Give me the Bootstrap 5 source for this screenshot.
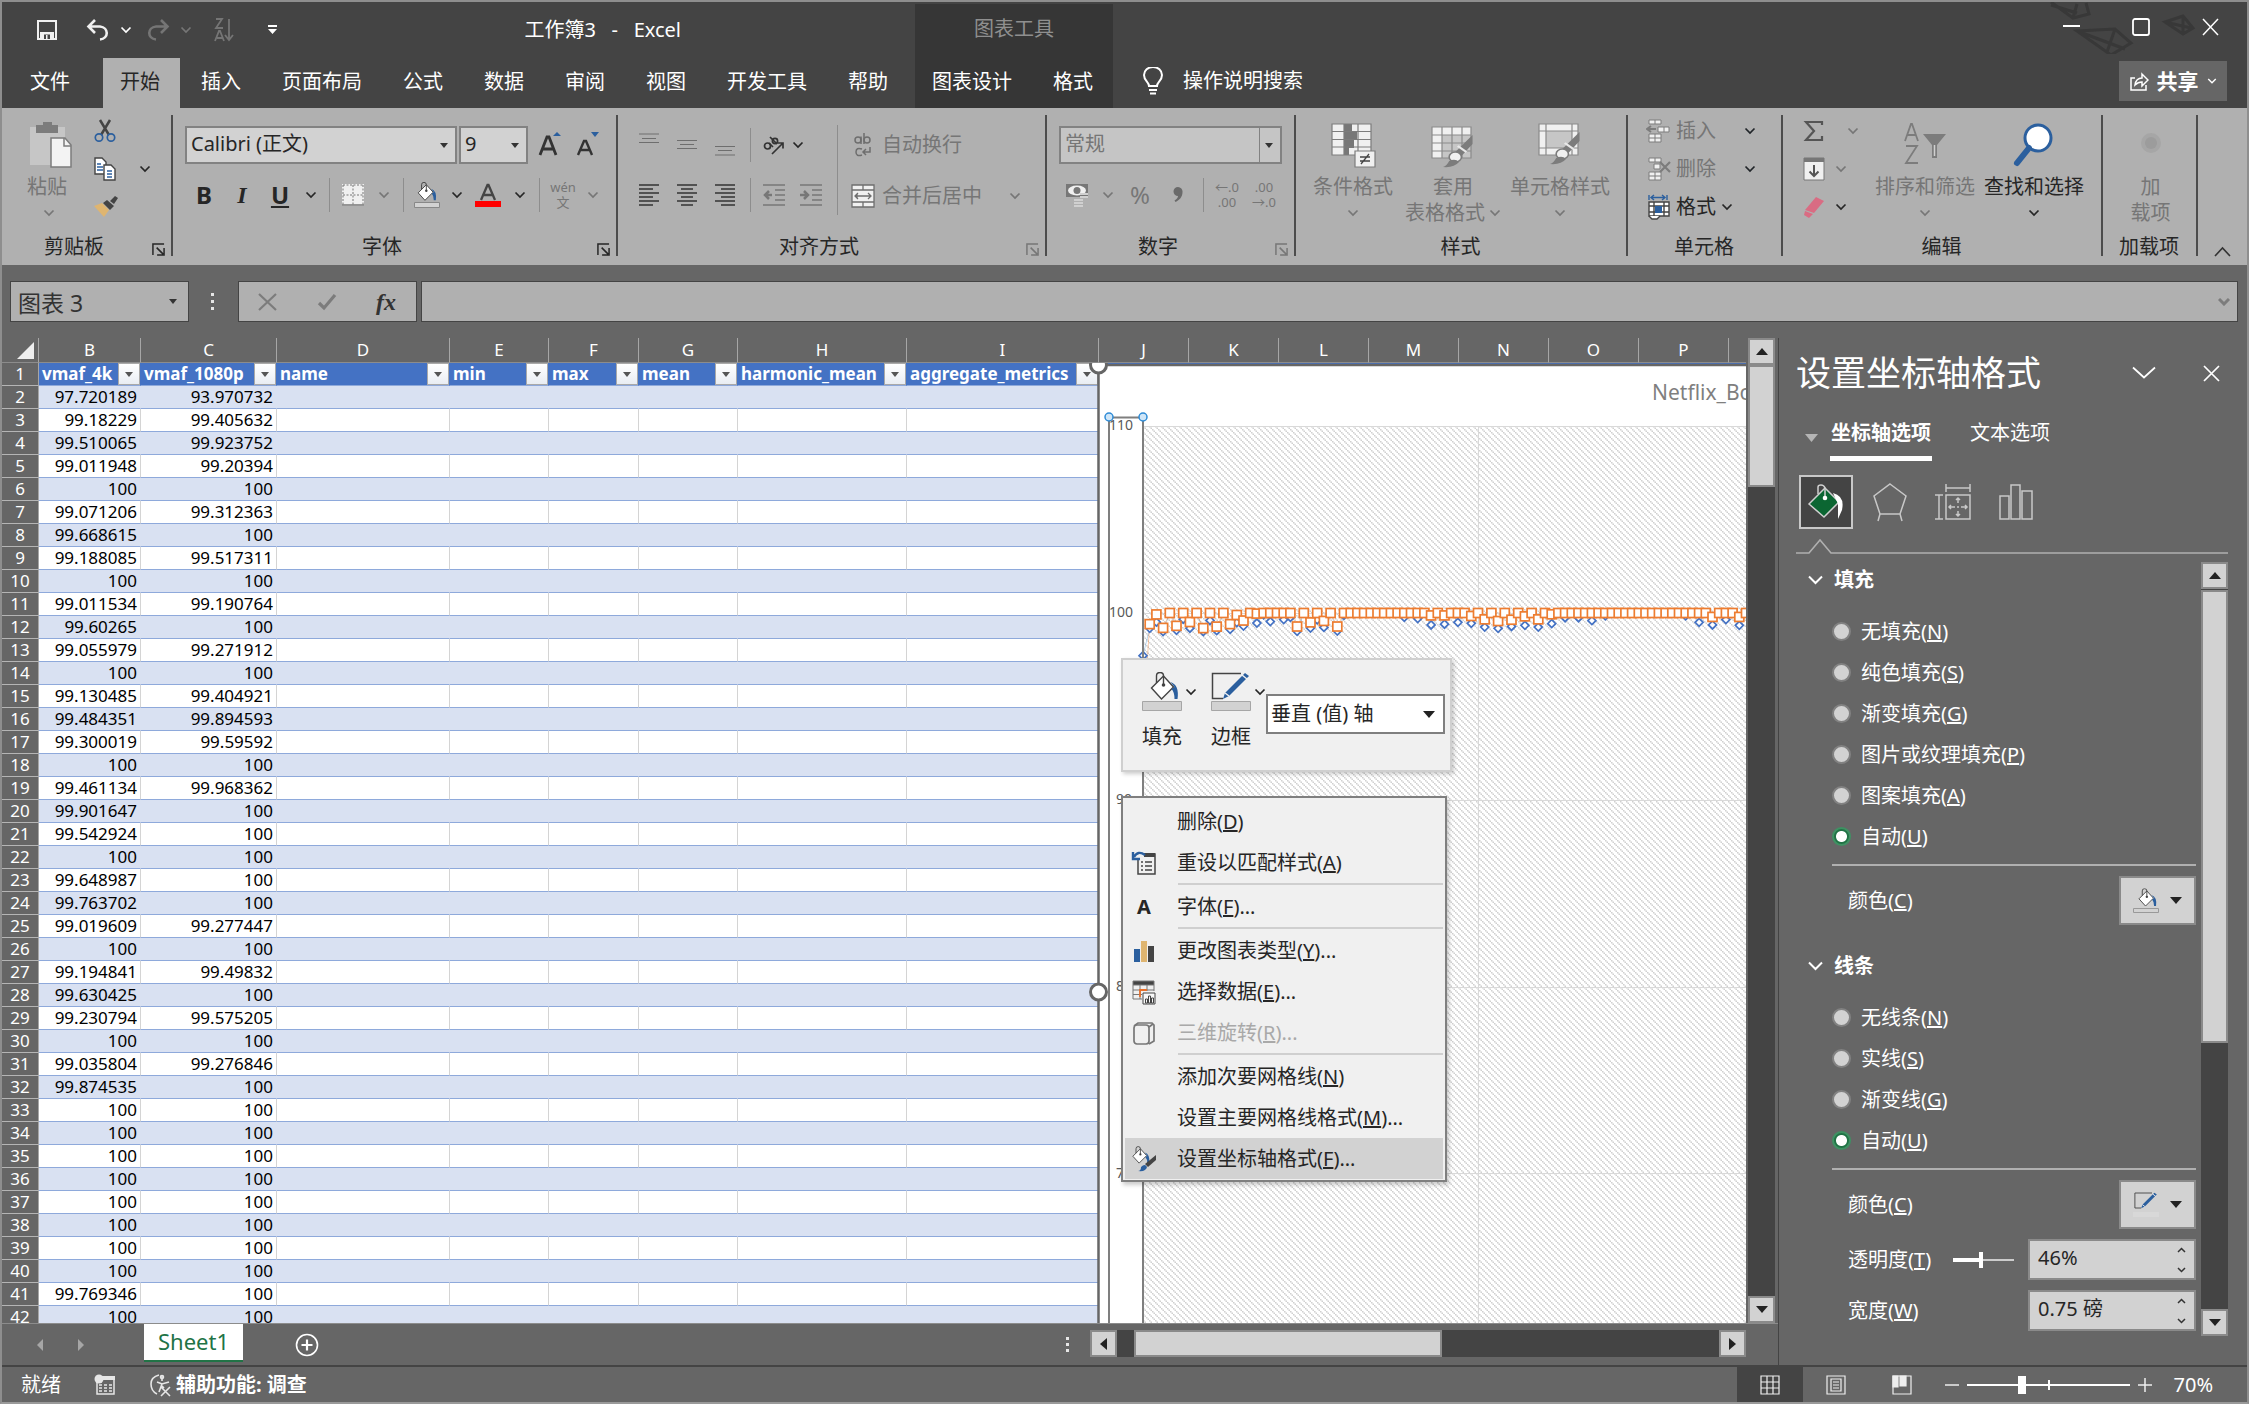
<!DOCTYPE html>
<html lang="zh-CN">
<head>
<meta charset="utf-8">
<meta name="viewport" content="width=device-width, initial-scale=1">
<title>工作簿3 - Excel</title>
<link href="https://cdn.jsdelivr.net/npm/bootstrap@5.3.0/dist/css/bootstrap.min.css" rel="stylesheet">
<style>
:root{--ink:#262626;--dim:#767676;--bar:#444;--mid:#666;--rib:#b0b0b0;--fld:#d2d2d2;--edge:#828282;--blue:#2b5f9e}
html,body{height:100%}
body{font-family:"Noto Sans","Noto Sans CJK SC",sans-serif;font-size:20px;line-height:26px;color:#fff;background:var(--mid);overflow:hidden}
.app{height:100vh;border:2px solid #8e8e8e;border-bottom-color:#9a9a9a}
.app>*{flex-shrink:0}
svg{display:block;flex:none}
button{font:inherit;color:inherit;background:none;border:0;padding:0}
.ctl{display:flex;align-items:center;justify-content:center;flex:none;height:34px}
.w12{width:12px}.w24{width:24px}.w26{width:26px}.w32{width:32px}.w36{width:36px}.w38{width:38px}.w44{width:44px}
/* title */
.titlebar{height:52px;background:var(--bar);position:relative}
.qat{width:913px;padding:3px 234px 0 34px}
.qat button{height:40px}
.ctx{background:#363636;width:198px;flex:none}
.titlebar .ctx{margin-top:2px;color:#8f8f8f}
.artwork{right:40px;top:0}
.winbtns{gap:52px;padding:0 28px 2px 0;position:relative}
.tabs{height:54px;background:var(--bar)}
.tabs a{color:#fff;text-decoration:none;white-space:nowrap;display:flex;align-items:center;padding:0 20px 3px 17px;margin:4px 1px 0 3px;height:50px}
.tabs a.filetab{padding:0 30px 3px 28px}
.tabs a.on{background:var(--rib);color:var(--ink)}
.tabs .ctx{margin-left:6px}
.tabs .ctx a{padding:4px 21px 3px 17px;margin:0 3px 0 0;height:54px}
.tabs .ctx a+a{margin:0;padding-right:0}
.tellme{padding-left:30px;gap:20px}
.share{background:var(--mid);width:108px;height:40px;margin:7px 20px 7px 0;font-weight:700;gap:8px;font-size:21px}
/* ribbon */
.ribbon{height:157px;background:var(--rib);color:var(--ink)}
.grp{display:flex;flex-direction:column;flex:none;position:relative}
.grp::after{content:"";position:absolute;right:0;top:7px;height:141px;width:2px;background:#4c4c4c}
.grp .body{height:126px;display:flex}
.grp .name{height:26px;display:flex;justify-content:center;align-items:center;padding-right:3px;position:relative}
.grp .launch{position:absolute;right:8px;top:9px}
.g-clip{width:171px}.g-font{width:445px}.g-align{width:429px}.g-num{width:249px}.g-style{width:332px}.g-cell{width:155px}.g-edit{width:320px}.g-add{width:95px}
.dim{color:var(--dim)}
.big{display:flex;flex-direction:column;align-items:center;padding-top:13px;white-space:nowrap}
.big>svg{margin-bottom:5px}
.big .ch{height:26px;display:flex;align-items:center}
.paste{width:76px;padding-left:22px}
.rows{padding-left:12px;padding-top:18px;gap:17px}
.row-b{margin-top:-3px}
.vs{width:12px;height:34px;flex:none;background:linear-gradient(#8d8d8d,#8d8d8d) center/1px 100% no-repeat}
.vs.tall{height:90px;width:14px;margin-top:17px}
.small3{padding-top:4px}
.small3>*{height:38px;display:flex;align-items:center}
.two{flex-direction:column;font-size:13px;line-height:15px}
select.cmb{appearance:none;background:var(--fld) url('data:image/svg+xml,<svg xmlns="http://www.w3.org/2000/svg" width="8" height="5"><path d="M0 0h8L4 5z" fill="%23333"/></svg>') no-repeat right 7px center;border:2px solid var(--edge);border-radius:0;height:38px;padding:0 4px 2px;font-size:20px;color:var(--ink);flex:none}
.cmb-face{width:272px}.cmb-size{width:69px;margin-left:2px}
select.cmb-num{width:223px;background-color:#c5c5c5;color:var(--dim)}
.numwrap{position:relative;width:223px}
.numwrap::after{content:"";position:absolute;right:22px;top:2px;bottom:2px;width:1px;background:var(--edge)}
.wr{gap:6px;padding-left:6px;height:38px;display:flex;align-items:center}
/* formula bar */
.fbar{height:73px;padding:16px 9px 0 8px}
.fbar input,.fxbox{height:41px;background:var(--rib);border:1px solid var(--bar);border-radius:0}
.namebox{width:179px;position:relative}
.namebox input{width:100%;font-size:23px;color:#333;padding:0 7px}
.namebox svg{position:absolute;right:12px;top:18px}
.fxbox{width:179px;display:flex;justify-content:space-between;align-items:center;padding:0 20px 0 19px}
.frm{position:relative;margin-left:4px}
.frm input{width:100%}
.frm svg{position:absolute;right:8px;top:17px}
/* grid */
main{min-height:0;flex:1 1 0}
.vp{position:relative;overflow:hidden}
table.xl{table-layout:fixed;width:1817px;border-collapse:separate;border-spacing:0;font-size:17px;line-height:22px;color:#000;background:#fff}
.xl thead th{height:25px;background:var(--mid);color:#fff;font-weight:400;text-align:center;padding:0;border-right:1px solid #a6a6a6;border-bottom:1px solid #8c8c8c}
.xl tbody tr{height:23px}
.xl tbody th{background:var(--mid);color:#fff;font-weight:400;text-align:center;padding:0;border-bottom:1px solid #b5b5b5;border-right:1px solid #a6a6a6}
.xl td{padding:0 3px 0 0;height:23px;text-align:right;border-bottom:1px solid #8ea9db;border-right:1px solid #d4d4d4;white-space:nowrap}
.xl tr.band td{background:#d9e1f2;border-right-color:#d9e1f2}
.xl tr.hd td{background:#4472c4;color:#fff;font-weight:700;padding:0;border-right-color:#4472c4}
.xl tr.hd td div{height:22px;padding-left:3px;overflow:hidden}
.flt{width:22px;height:22px;background:linear-gradient(#fff,#e9edf3);border:1px solid #a9a9a9;display:flex;align-items:center;justify-content:center;flex:none}
.c0{width:37px}.cB{width:102px}.cC{width:136px}.cD{width:173px}.cE{width:99px}.cF{width:90px}.cG{width:99px}.cH{width:169px}.cI{width:192px}.cJ{width:90px}
.chartbox{position:absolute;left:1084px;top:25px;right:0;bottom:0;overflow:hidden}
.mini{position:absolute;left:1119px;top:320px;width:331px;height:114px;background:#f0f0f0;border:2px solid #cfcfcf;box-shadow:2px 2px 4px #0003;color:var(--ink);padding:12px 4px 0 19px}
.mini .mb{display:flex;flex-direction:column;width:69px;align-items:flex-start;flex:none}
.mini .mb>div{display:flex;align-items:center;gap:2px}
.mini .mb span{margin-top:12px}
.mini select{appearance:none;width:179px;height:40px;margin-top:22px;margin-left:-14px;border:2px solid #7f7f7f;border-radius:0;color:var(--ink);font-size:20px;padding:0 3px 1px;background:#fff url('data:image/svg+xml,<svg xmlns="http://www.w3.org/2000/svg" width="12" height="7"><path d="M0 0h12L6 7z" fill="%23222"/></svg>') no-repeat right 8px center}
.ctxmenu{position:absolute;left:1119px;top:458px;width:326px;background:#f0f0f0;border:2px solid #7f7f7f;box-shadow:2px 3px 4px #0003;color:var(--ink);padding:3px 2px 1px}
.ctxmenu button{display:flex;align-items:center;width:100%;height:41px;padding-left:6px}
.ctxmenu button>svg,.ctxmenu button>i{width:26px;height:26px;margin-right:20px;flex:none;font-style:normal;font-weight:700;text-align:center}
.ctxmenu button.hot{background:#d2d2d2}
.ctxmenu button:disabled{color:#a9a9a9}
.ctxmenu hr{margin:0 0 1px 53px;border:0;height:2px;background:#cfcfcf;opacity:1}
/* scroll bars */
.sb{background:var(--bar);width:27px;flex:none;display:flex;flex-direction:column}
.sb.hz{width:auto;height:27px;flex-direction:row}
.sbb{background:var(--fld);border:2px solid #8a8a8a;width:27px;height:27px;display:flex;align-items:center;justify-content:center;flex:none}
.thumb{background:var(--fld);border:2px solid #8a8a8a;flex:none}
.th-v{height:122px}.th-h{width:308px;margin-left:17px}.th-p{height:453px;margin-top:1px}
.vcol{width:32px;padding:0 3px 0 2px;flex:none}
.foot{height:42px;border-top:1px solid #8c8c8c;flex:none}
.sheettab{background:#fff;color:#217346;font-size:22px;height:38px;width:99px;border-bottom:2px solid #217346;margin:0 52px 0 60px;text-decoration:none;display:flex;justify-content:center;align-items:center;padding-bottom:2px}
.hbar{width:656px;padding-top:6px}
/* pane */
.pane{width:469px;border-left:1px solid var(--bar);flex:none;padding:0 19px 0 17px}
.pane h1{font-size:35px;line-height:48px;font-weight:400;margin:0}
.phead{padding-top:11px;padding-right:8px}
.ptabs{padding:15px 0 0 9px;height:65px}
.ptabs a{color:#fff;text-decoration:none;line-height:42px;height:44px}
.ptabs a.on{font-weight:700;border-bottom:5px solid #fff;padding:0 1px;height:49px;margin:0 38px 0 12px}
.picons{padding:13px 0 0 3px;gap:20px}
.picons button{height:54px;display:flex;align-items:center;justify-content:center}
.picons .on{width:54px;background:var(--bar);border:2px solid #c8c8c8}
.notch{height:16px;margin-top:9px}
.pbody{padding:8px 0 29px;min-height:0}
.plist{padding:0 5px 0 12px}
.sec{height:36px;gap:11px;font-weight:700}
.opts{padding:13px 0 7px}
.opt{display:flex;align-items:center;height:41px;gap:10px;padding-left:24px}
.opt input{appearance:none;width:19px;height:19px;border-radius:50%;background:#d2d2d2;border:2px solid #828282;margin:0;flex:none}
.opt input:checked{background:radial-gradient(#fff 0 5px,#217346 6px);border-color:#3f9163}
.rule{height:2px;background:#b0b0b0;margin-left:24px}
.prow{display:flex;align-items:center;padding-left:40px;height:51px}
.rule+.prow{margin-top:9px}
.clr{width:77px;height:49px;background:var(--fld);border:2px solid #8a8a8a;margin-left:auto;display:flex;align-items:center;justify-content:center;gap:11px}
.spin{width:168px;height:41px;border:2px solid #8a8a8a;background:var(--fld);display:flex;align-items:center;padding-right:8px;flex:none}
.spin input{border:0;background:none;width:100%;min-width:0;color:var(--ink);font-size:20px;padding:0 8px 4px}
.rng{appearance:none;width:61px;height:16px;margin:0 14px 0 auto;background:linear-gradient(#fff,#fff) left center/28px 4px no-repeat,linear-gradient(#ccc,#ccc) center/100% 2px no-repeat}
.rng::-webkit-slider-thumb{appearance:none;width:4px;height:16px;background:#fff}
/* status */
.status{height:37px;border-top:2px solid var(--bar)}
.status .vb{width:66px;height:35px;display:flex;align-items:center;justify-content:center;flex:none}
.status .vb.sel{background:var(--bar)}
.zoomr{appearance:none;width:163px;height:18px;margin:0 8px;background:linear-gradient(#fff,#fff) 81px center/2px 10px no-repeat,linear-gradient(#fff,#fff) center/100% 2px no-repeat}
.zoomr::-webkit-slider-thumb{appearance:none;width:8px;height:18px;background:#fff}
.pct{padding:0 34px 0 22px}
</style>
<script src="https://cdn.jsdelivr.net/npm/bootstrap@5.3.0/dist/js/bootstrap.bundle.min.js"></script>
</head>
<body>
<svg width="0" height="0" class="position-absolute" aria-hidden="true">
<symbol id="chev" viewBox="0 0 12 8"><path d="M1.500 1.500L6 6l4.500-4.500" fill="none" stroke="currentColor" stroke-width="1.700"/></symbol>
<symbol id="launch" viewBox="0 0 14 14"><path d="M1 13V1h12M5 5l7 7M13 5.500V13H5.500" fill="none" stroke="currentColor" stroke-width="1.600"/></symbol>
<symbol id="bucket" viewBox="0 0 32 28"><path d="M3 16L15 4l10 11-12 12z" fill="#fff" stroke="#444" stroke-width="1.400"/><path d="M8 11V4q0-3.500 3.500-3.500T15 4v9" fill="none" stroke="#444" stroke-width="1.400"/><circle cx="15" cy="13" r="1.800" fill="#444"/><path d="M22 10q9 3 7 17h-3q0-7-3-10l3-2z" fill="#2b5f9e"/></symbol>
<symbol id="pen" viewBox="0 0 40 28"><path d="M30 1.500H1.500v25H12" fill="none" stroke="#444" stroke-width="1.500"/><path d="M12 27l2-6L34 1l4 3-20 20z" fill="#2b5f9e"/><path d="M31 3l5 4M14 21l4 3" stroke="#f0f0f0" stroke-width="1.500"/></symbol>
<symbol id="tbrush" viewBox="0 0 26 36"><path d="M24 1v9L15 22l-5-4z" fill="#7c7c7c"/><path d="M12 12l7 6" stroke="#e8e8e8" stroke-width="2"/><circle cx="10" cy="23" r="5" fill="#f0f0f0" stroke="#7c7c7c" stroke-width="1.300"/><path d="M0 33q3-1 5-6 5-3 8 1-4 6-13 5z" fill="#7c7c7c"/></symbol>
</svg>
<div class="app d-flex flex-column">

<header>
<div class="titlebar d-flex">
  <svg class="artwork position-absolute" width="170" height="52" fill="none" stroke="#383838" stroke-width="3"><path d="M14 0l22 16 16-4-3-11M14 3l26 8M36 16l4-14M40 29l38-2 16 14-20 12zM40 29l48 18M78 27L70 50M128 20l18-6 10 12-10 6zM128 20l26 6M146 14v18"/></svg>
  <div class="qat d-flex align-items-center">
    <button aria-label="保存"><svg width="22" height="22" fill="none" stroke="#f0f0f0" stroke-width="2"><path d="M2 2h18v18H2z"/><path d="M4 13h14v7H4z" fill="#f0f0f0" stroke="none"/><path d="M8 15.500h6V20H8z" fill="#444" stroke="none"/><path d="M10 16h1.500v4H10z" fill="#f0f0f0" stroke="none"/></svg></button>
    <button class="ms-4 ps-1" aria-label="撤消"><svg width="24" height="22" fill="none" stroke="#f0f0f0" stroke-width="2.600"><path d="M9 1L2.500 7.500 9 14M3 7.500h11c9 1 9 12 0 13"/></svg></button>
    <button class="w32 ctl"><svg width="12" height="8"><use href="#chev"/></svg></button>
    <button class="ms-1" aria-label="恢复"><svg width="24" height="22" fill="none" stroke="#757575" stroke-width="2.600"><path d="M15 1l6.500 6.500L15 14M21 7.500H10c-9 1-9 12 0 13"/></svg></button>
    <button class="w32 ctl dim"><svg width="12" height="8"><use href="#chev"/></svg></button>
    <button class="ms-2 ps-1" aria-label="排序"><svg width="22" height="26" fill="none" stroke="#757575" stroke-width="1.800"><path d="M2 2h6L2 11h7M1 24l4-10h1l4 10M3 21h6M15 2v20M11 18l4 5 4-5"/></svg></button>
    <button class="ms-4 ps-2" aria-label="自定义"><svg width="9" height="10" fill="#fff"><path d="M0 0h9v2H0zM0 4h9L4.500 9z"/></svg></button>
    <div class="ms-auto">工作簿3&nbsp;&nbsp; -&nbsp;&nbsp; Excel</div>
  </div>
  <div class="ctx d-flex align-items-center justify-content-center">图表工具</div>
  <div class="winbtns ms-auto d-flex align-items-center">
    <button aria-label="最小化"><svg width="17" height="18"><path d="M0 7h17v2H0z" fill="#fff"/></svg></button>
    <button aria-label="最大化"><svg width="18" height="18" fill="none" stroke="#fff" stroke-width="1.800"><rect x="1" y="1" width="16" height="16" rx="2"/></svg></button>
    <button aria-label="关闭"><svg width="17" height="18" fill="none" stroke="#fff" stroke-width="1.500"><path d="M1 1l15 16M16 1L1 17"/></svg></button>
  </div>
</div>
<nav class="tabs d-flex">
  <a href="#" class="filetab m-0 mt-1">文件</a><a href="#" class="on">开始</a><a href="#">插入</a><a href="#">页面布局</a><a href="#">公式</a><a href="#">数据</a><a href="#">审阅</a><a href="#">视图</a><a href="#">开发工具</a><a href="#">帮助</a>
  <div class="ctx d-flex"><a href="#">图表设计</a><a href="#">格式</a></div>
  <div class="tellme d-flex align-items-center"><svg width="20" height="28" fill="none" stroke="#fff" stroke-width="2"><path d="M6 19c0-4-5-5-5-11a9 8 0 0 1 18 0c0 6-5 7-5 11zM6 23h8M7 26.500h6"/></svg><span>操作说明搜索</span></div>
  <button class="share ms-auto d-flex align-items-center justify-content-center"><svg width="19" height="20" fill="none" stroke="#fff" stroke-width="1.500"><path d="M5 7H1v12h15v-5M5 14q1-7 7-7V3l6 6-6 6v-4q-4 0-7 3z"/></svg>共享<svg width="10" height="8"><use href="#chev"/></svg></button>
</nav>
</header>

<section class="ribbon d-flex">
  <div class="grp g-clip">
    <div class="body">
      <button class="big dim paste">
        <svg width="44" height="48" fill="none"><path d="M1 6h35v38H1z" fill="#c6c6c6"/><path d="M7 4h7V1h9v3h6v8H7z" fill="#7c7c7c"/><path d="M22 17h14l6 7v22H22z" fill="#f3f3f3" stroke="#7c7c7c" stroke-width="1.500"/><path d="M35 17v8h7" stroke="#7c7c7c" stroke-width="1.500"/></svg>
        <span class="pe-2">粘贴</span><span class="ch pe-1"><svg width="12" height="8"><use href="#chev"/></svg></span></button>
      <div class="small3 ps-3">
        <button aria-label="剪切"><svg width="22" height="24" fill="none"><path d="M6 1l9 15M16 1L7 16" stroke="#444" stroke-width="2.500"/><circle cx="5" cy="18.500" r="3.700" stroke="#2b5f9e" stroke-width="1.700"/><circle cx="17" cy="18.500" r="3.700" stroke="#2b5f9e" stroke-width="1.700"/></svg></button>
        <div><button aria-label="复制"><svg width="22" height="24" fill="#fff" stroke="#444" stroke-width="1.400"><path d="M1 1h7l4 4v12H1z"/><path d="M10 8h7l4 4v11H10z"/><path d="M3 7h4M3 10h6M3 13h6M13 14h5M13 17h5M13 20h5" stroke="#2b5f9e"/></svg></button><button class="ctl w26 ms-3"><svg width="12" height="8"><use href="#chev"/></svg></button></div>
        <button aria-label="格式刷"><svg width="24" height="22"><path d="M0 10l8-3 7 7-5 7z" fill="#dfb570"/><path d="M9 7l4-3 7 6-4 4zM16 5l5-5 3 2-4 6z" fill="#444"/></svg></button>
      </div>
    </div>
    <div class="name"><span class="pe-4">剪贴板</span><svg class="launch" width="13" height="13"><use href="#launch"/></svg></div>
  </div>

  <div class="grp g-font">
    <div class="body flex-column rows">
      <div class="d-flex align-items-center">
        <select class="cmb cmb-face" aria-label="字体"><option>Calibri (正文)</option></select><select class="cmb cmb-size" aria-label="字号"><option>9</option></select>
        <button class="ctl w44"><svg width="24" height="26"><path d="M2 23L9 5h2l7 18M5 17h10" fill="none" stroke="#333" stroke-width="2.800"/><path d="M15 4l4-4 4 4z" fill="#2b5f9e"/></svg></button>
        <button class="ctl w32"><svg width="24" height="26"><path d="M2 23L8 9h2l6 14M5 18h8" fill="none" stroke="#333" stroke-width="2.400"/><path d="M15 0h8l-4 5z" fill="#2b5f9e"/></svg></button>
      </div>
      <div class="d-flex align-items-center row-b">
        <button class="ctl w38 fw-bold fs-4">B</button><button class="ctl w38 fs-4 fst-italic" style="font-family:'Liberation Serif',serif;font-weight:700">I</button><button class="ctl w38 fs-4 fw-bold text-decoration-underline">U</button><button class="ctl w24"><svg width="12" height="8"><use href="#chev"/></svg></button><i class="vs"></i>
        <button class="ctl w36" aria-label="边框"><svg width="22" height="22"><path d="M0 0h22v22H0z" fill="#f0f0f0"/><path d="M1 1h20M1 1v20M21 1v20M11 1v20M1 11h20" stroke="#777" stroke-dasharray="2 1.500"/><path d="M0 21h22" stroke="#777" stroke-width="1.500"/></svg></button><button class="ctl w26 dim"><svg width="12" height="8"><use href="#chev"/></svg></button><i class="vs"></i>
        <button class="ctl w36" aria-label="填充颜色"><svg width="26" height="26"><svg x="2" y="0" width="22" height="19" viewBox="0 0 32 28"><use href="#bucket"/></svg><path d="M.5 20.500h25v5H.5z" fill="#d2d2d2" stroke="#888"/></svg></button><button class="ctl w24"><svg width="12" height="8"><use href="#chev"/></svg></button>
        <button class="ctl w38" aria-label="字体颜色"><svg width="26" height="26"><path d="M6 18L12.500 3h1L20 18M9 13h8" fill="none" stroke="#444" stroke-width="2.300"/><path d="M0 19h26v6H0z" fill="#f00"/></svg></button><button class="ctl w26"><svg width="12" height="8"><use href="#chev"/></svg></button><i class="vs"></i>
        <button class="ctl w36 dim two"><span>wén</span><span>文</span></button><button class="ctl w24 dim"><svg width="12" height="8"><use href="#chev"/></svg></button>
      </div>
    </div>
    <div class="name"><span class="pe-4">字体</span><svg class="launch" width="13" height="13"><use href="#launch"/></svg></div>
  </div>

  <div class="grp g-align">
    <div class="body">
      <div class="d-flex flex-column rows">
        <div class="d-flex align-items-center" style="height:38px">
          <button class="ctl w38" aria-label="顶端对齐"><svg width="20" height="24" stroke="#6e6e6e" stroke-width="1.200"><path d="M0 1h20M3 5.500h14M0 9.500h20"/></svg></button><button class="ctl w38" aria-label="垂直居中"><svg width="20" height="24" stroke="#6e6e6e" stroke-width="1.200"><path d="M0 7.500h20M3 11.500h14M0 15.500h20"/></svg></button><button class="ctl w38" aria-label="底端对齐"><svg width="20" height="24" stroke="#6e6e6e" stroke-width="1.200"><path d="M0 13.500h20M3 17.500h14M0 22h20"/></svg></button><i class="vs"></i>
          <button class="ctl w36" aria-label="方向"><svg width="22" height="20" fill="none" stroke="#333" stroke-width="1.700"><path d="M9 19L20 8M14.500 8H20v5.500"/><circle cx="4.500" cy="11" r="3"/><path d="M6 8l4 4M7 2l7 7"/><circle cx="12" cy="6" r="2.600"/></svg></button><button class="ctl w12"><svg width="12" height="8"><use href="#chev"/></svg></button>
        </div>
        <div class="d-flex align-items-center row-b">
          <button class="ctl w38" aria-label="左对齐"><svg width="20" height="22" stroke="#333" stroke-width="1.500"><path d="M0 1h20M0 5h14M0 9h20M0 13h14M0 17h20M0 21h14"/></svg></button><button class="ctl w38" aria-label="居中"><svg width="20" height="22" stroke="#333" stroke-width="1.500"><path d="M0 1h20M4 5h12M0 9h20M4 13h12M0 17h20M4 21h12"/></svg></button><button class="ctl w38" aria-label="右对齐"><svg width="20" height="22" stroke="#333" stroke-width="1.500"><path d="M0 1h20M6 5h14M0 9h20M6 13h14M0 17h20M6 21h14"/></svg></button><i class="vs"></i>
          <button class="ctl w36" aria-label="减少缩进"><svg width="22" height="22" fill="none" stroke="#777" stroke-width="1.500"><path d="M0 1h22M12 6h10M12 11h10M12 16h10M0 21h22"/><path d="M9 11H2M6 7l-4 4 4 4" stroke-width="2.500"/></svg></button><button class="ctl w38" aria-label="增加缩进"><svg width="22" height="22" fill="none" stroke="#777" stroke-width="1.500"><path d="M0 1h22M12 6h10M12 11h10M12 16h10M0 21h22"/><path d="M0 11h7M4 7l4 4-4 4" stroke-width="2.500"/></svg></button>
        </div>
      </div>
      <i class="vs tall"></i>
      <div class="d-flex flex-column" style="padding-top:18px;gap:13px">
        <button class="wr dim"><svg width="26" height="26" fill="none" stroke="#6e6e6e" stroke-width="1.500"><circle cx="8" cy="8" r="3"/><path d="M11 4.500V12M14 1v11"/><circle cx="17" cy="8" r="3"/><path d="M12 17q-6-2-6 3t6 3M20 15v5h-7M16 17l-3 3 3 3"/></svg>自动换行</button>
        <button class="wr dim"><svg width="26" height="24" fill="#f0f0f0" stroke="#6e6e6e" stroke-width="1.300"><path d="M2 1h22v22H2zM2 6h22M2 18h22M13 1v5M13 18v5M5 12h16M8 9l-3 3 3 3M18 9l3 3-3 3"/></svg>合并后居中<svg width="12" height="8" style="margin-left:21px"><use href="#chev"/></svg></button>
      </div>
    </div>
    <div class="name"><span class="pe-4">对齐方式</span><svg class="launch dim" width="13" height="13"><use href="#launch"/></svg></div>
  </div>

  <div class="grp g-num">
    <div class="body flex-column rows">
      <div class="numwrap"><select class="cmb cmb-num" aria-label="数字格式"><option>常规</option></select></div>
      <div class="d-flex align-items-center dim row-b">
        <button class="ctl w36" aria-label="会计格式"><svg width="24" height="24"><path d="M1 1h22v13H1z" fill="#777"/><ellipse cx="12" cy="7.500" rx="9" ry="5" fill="#f0f0f0"/><circle cx="12" cy="7.500" r="3.500" fill="#777"/><path d="M15 11h8M15 14h8M9 17h9M9 20h9M9 23h9" stroke="#d0d0d0" stroke-width="2"/></svg></button><button class="ctl w26"><svg width="12" height="8"><use href="#chev"/></svg></button>
        <button class="ctl w38 fs-4">%</button><button class="ctl w38" aria-label="千位分隔"><svg width="12" height="16"><path d="M6 0a4.500 4.500 0 0 1 4.500 5c0 5-3 8-7 10l-1-1.500c2-1 3.500-3 3.500-4.500A4.500 4.500 0 1 1 6 0z" fill="#6a6a6a"/></svg></button><i class="vs"></i>
        <button class="ctl w36 two"><span>←.0</span><span>.00</span></button><button class="ctl w38 two"><span>.00</span><span>→.0</span></button>
      </div>
    </div>
    <div class="name"><span class="pe-4">数字</span><svg class="launch dim" width="13" height="13"><use href="#launch"/></svg></div>
  </div>

  <div class="grp g-style">
    <div class="body dim" style="padding-left:10px">
      <button class="big" style="width:94px"><svg width="46" height="48"><path d="M2 3h39v31H2z" fill="#f0f0f0"/><path d="M14 3h8v7h5v9h-3v8h-5v7h-5z" fill="#777"/><path d="M2 3h39v31H2zM14 3v31M28 3v31M2 10.500h39M2 18.500h39M2 26h39" fill="none" stroke="#7c7c7c" stroke-width="1.200"/><path d="M25 30h20v16H25z" fill="#f0f0f0" stroke="#7c7c7c" stroke-width="1.200"/><path d="M30 36h10M30 40h10M39 33l-8 10" stroke="#444" stroke-width="1.300"/></svg><span>条件格式</span><span class="ch"><svg width="12" height="8"><use href="#chev"/></svg></span></button>
      <button class="big" style="width:106px"><svg width="46" height="48"><path d="M2 6h39v31H2z" fill="#f0f0f0"/><path d="M12 14h29v23H12z" fill="#c6c6c6"/><path d="M2 6h39v31H2zM12 6v31M22 6v31M32 6v31M2 14h39M2 22h39M2 30h39" fill="none" stroke="#8a8a8a" stroke-width="1.200"/><svg x="13" y="13" width="32" height="36" viewBox="0 0 26 36" preserveAspectRatio="none"><use href="#tbrush"/></svg></svg><span>套用</span><span class="ch gap-1">表格格式<svg width="12" height="8"><use href="#chev"/></svg></span></button>
      <button class="big" style="width:108px"><svg width="46" height="48"><path d="M2 3h39v31H2z" fill="#f0f0f0"/><path d="M9 10h26v17H9z" fill="#c6c6c6"/><path d="M2 3h39v31H2zM9 3v31M35 3v31M2 10h39M2 27h39" fill="none" stroke="#8a8a8a" stroke-width="1.200"/><svg x="13" y="10" width="32" height="36" viewBox="0 0 26 36" preserveAspectRatio="none"><use href="#tbrush"/></svg></svg><span>单元格样式</span><span class="ch"><svg width="12" height="8"><use href="#chev"/></svg></span></button>
    </div>
    <div class="name">样式</div>
  </div>

  <div class="grp g-cell">
    <div class="body flex-column small3" style="padding-left:18px">
      <button class="dim"><svg width="26" height="24" class="me-1" fill="#f0f0f0" stroke="#7c7c7c"><path d="M3 1h12v4H3zM9 1v4M12 8h11v5H12zM18 8v5M3 15h12v8H3zM9 15v8M3 19h12"/><path d="M10 10H1M5 7l-4 3 4 3" stroke-width="2" fill="none"/></svg>插入<svg width="12" height="8" class="text-dark" style="margin-left:28px"><use href="#chev"/></svg></button>
      <button class="dim"><svg width="26" height="24" class="me-1" fill="#f0f0f0" stroke="#7c7c7c"><path d="M3 1h12v4H3zM9 1v4M8 7h6v5H8zM3 15h12v8H3zM9 15v8M3 19h12"/><path d="M14 5l10 10M24 5L14 15" stroke-width="2.200"/></svg>删除<svg width="12" height="8" class="text-dark" style="margin-left:28px"><use href="#chev"/></svg></button>
      <button><svg width="26" height="26" class="me-1" fill="#fff" stroke="#444" stroke-width="1.400"><path d="M3 8h20v14H3zM3 12h20M3 18h20M8 8v14M18 8v14"/><path d="M9 12h7v7H9z" fill="#2b5f9e" stroke="none"/><path d="M3 22l3 3h5l3-3"/><path d="M3 1v5M21 1v5M5 3.500h14M8 1L5 3.500 8 6M16 1l3 2.500L16 6" stroke="#2b5f9e" fill="none"/></svg>格式<svg width="12" height="8" style="margin-left:5px"><use href="#chev"/></svg></button>
    </div>
    <div class="name">单元格</div>
  </div>

  <div class="grp g-edit">
    <div class="body" style="padding-left:18px">
      <div class="small3" style="width:68px">
        <button class="dim"><svg width="26" height="22" fill="none" stroke="#555" stroke-width="2.200"><path d="M21 5V2H5l8 9-8 9h16v-4"/></svg><svg width="12" height="8" style="margin-left:20px"><use href="#chev"/></svg></button>
        <button class="dim"><svg width="26" height="24"><path d="M3 1h20v22H3z" fill="#f0f0f0" stroke="#777"/><path d="M3 1h20v4H3z" fill="#777"/><path d="M13 8v11M8.500 14.500L13 19l4.500-4.500" fill="none" stroke="#555" stroke-width="2"/></svg><svg width="12" height="8" class="ms-2"><use href="#chev"/></svg></button>
        <button><svg width="26" height="22"><path d="M15 1l8 4-10 12-9-3z" fill="#d96c83"/><path d="M4 15l8 3-4 4-5-3z" fill="#d96c83"/></svg><svg width="12" height="8" class="ms-2"><use href="#chev"/></svg></button>
      </div>
      <button class="big dim" style="width:112px"><svg width="44" height="48" fill="none" stroke="#7c7c7c" stroke-width="1.800"><path d="M2 20L8 3h1l6 17M4 14h9M3 25h11L3 42h12"/><path d="M20 13h23L34 24v13h-5V24z" fill="#7c7c7c" stroke="none"/><path d="M31.500 24v11" stroke="#d0d0d0" stroke-width="1.500"/></svg><span>排序和筛选</span><span class="ch"><svg width="12" height="8"><use href="#chev"/></svg></span></button>
      <button class="big" style="width:106px"><svg width="44" height="48"><circle cx="26" cy="17" r="13" fill="#fff" stroke="#2b5f9e" stroke-width="3"/><path d="M17 27L5 42" stroke="#2b5f9e" stroke-width="6" stroke-linecap="round"/></svg><span>查找和选择</span><span class="ch"><svg width="12" height="8"><use href="#chev"/></svg></span></button>
    </div>
    <div class="name">编辑</div>
  </div>

  <div class="grp g-add">
    <div class="body justify-content-center"><button class="big dim"><svg width="44" height="48"><circle cx="22" cy="22" r="10" fill="#a6a6a6"/><circle cx="22" cy="22" r="6" fill="#9c9c9c"/></svg><span>加</span><span>载项</span></button></div>
    <div class="name">加载项</div>
  </div>
  <button class="ms-auto align-self-end pb-2 me-3" aria-label="折叠功能区"><svg width="17" height="11" fill="none" stroke="#333" stroke-width="1.600"><path d="M1 10l7.500-8L16 10"/></svg></button>
</section>

<div class="fbar d-flex">
  <div class="namebox"><input type="text" value="图表 3" aria-label="名称框"><svg width="8" height="5"><path d="M0 0h8L4 5z" fill="#333"/></svg></div>
  <svg width="49" height="41" fill="#e6e6e6"><path d="M22 12h3v3h-3zM22 19h3v3h-3zM22 26h3v3h-3z"/></svg>
  <div class="fxbox">
    <button aria-label="取消"><svg width="19" height="18" fill="none" stroke="#7c7c7c" stroke-width="2.200"><path d="M1 1l17 16M18 1L1 17"/></svg></button>
    <button aria-label="输入"><svg width="20" height="18" fill="none" stroke="#7c7c7c" stroke-width="3.200"><path d="M2 10l5 5L18 2"/></svg></button>
    <button style="font:italic 700 24px/30px 'Liberation Serif',serif;color:#333">fx</button>
  </div>
  <div class="frm flex-grow-1"><input type="text" aria-label="编辑栏"><svg width="12" height="8" fill="none" stroke="#7c7c7c" stroke-width="3"><path d="M1 1l5 5 5-5"/></svg></div>
</div>

<main class="d-flex">
  <div class="d-flex flex-column flex-grow-1" style="min-width:0">
    <div class="d-flex flex-grow-1" style="min-height:0">
      <div class="vp flex-grow-1">
        <table class="xl">
          <colgroup><col class="c0"><col class="cB"><col class="cC"><col class="cD"><col class="cE"><col class="cF"><col class="cG"><col class="cH"><col class="cI"><col class="cJ" span="8"></colgroup>
          <thead><tr><th><svg class="ms-auto me-1" width="17" height="17"><path d="M17 0v17H0z" fill="#eee"/></svg></th><th>B</th><th>C</th><th>D</th><th>E</th><th>F</th><th>G</th><th>H</th><th>I</th><th>J</th><th>K</th><th>L</th><th>M</th><th>N</th><th>O</th><th>P</th><th></th></tr></thead>
          <tbody id="cells"></tbody>
        </table>
        <div class="chartbox"><svg id="chart" width="1400" height="1000" font-size="14" fill="#595959">
          <defs><pattern id="hatch" width="6" height="6" patternUnits="userSpaceOnUse"><path d="M0 0h1.500v1.500H0zM1.500 1.500H3V3H1.500zM3 3h1.500v1.500H3zM4.500 4.500H6V6H4.500z" fill="#d0d0d0"/></pattern></defs>
        </svg></div>
        <div class="mini d-flex">
          <div class="mb"><div><svg width="41" height="40"><svg x="6" y="0" width="33" height="28"><use href="#bucket"/></svg><path d="M.5 29.500h39v9H.5z" fill="#d2d2d2" stroke="#a6a6a6"/></svg><svg width="12" height="8"><use href="#chev"/></svg></div><span>填充</span></div>
          <div class="mb"><div><svg width="41" height="40"><svg x="0" y="0" width="40" height="28"><use href="#pen"/></svg><path d="M.5 29.500h39v9H.5z" fill="#d2d2d2" stroke="#a6a6a6"/></svg><svg width="12" height="8"><use href="#chev"/></svg></div><span>边框</span></div>
          <select aria-label="图表元素"><option>垂直 (值) 轴</option></select>
        </div>
        <div class="ctxmenu" role="menu">
          <button><i></i><span>删除(<u>D</u>)</span></button>
          <button><svg viewBox="0 0 26 26" fill="none" stroke="#444" stroke-width="1.500"><path d="M7 10v14h17V4H14"/><path d="M13 3h11v4H13z" fill="#444" stroke="none"/><path d="M14 12h7M14 16h7M14 20h7M10 12h2M10 16h2M10 20h2"/><path d="M14 5q-7-5-11 2M2 2v7h7" stroke="#2b5f9e" stroke-width="2.400"/></svg><span>重设以匹配样式(<u>A</u>)</span></button>
          <hr>
          <button><i>A</i><span>字体(<u>F</u>)...</span></button>
          <hr>
          <button><svg viewBox="0 0 26 26"><path d="M3 11h6v13H3z" fill="#2b5f9e"/><path d="M10 3h6v21h-6z" fill="#dfb570"/><path d="M17 8h6v16h-6z" fill="#444"/></svg><span>更改图表类型(<u>Y</u>)...</span></button>
          <button><svg viewBox="0 0 26 26" fill="none" stroke="#777" stroke-width="1"><path d="M2 2h21v4H2z" fill="#444"/><path d="M2 6v14h9M9 6v14M16 6v6M2 11h21M2 15.500h9M23 6v6"/><path d="M9 18v-7h7" stroke="#e8702a" stroke-width="1.800"/><path d="M12 14h12v11H12z" fill="#f8f8f8" stroke="#444"/><path d="M14.500 24v-4h2v4zM17.500 24v-7h2v7zM20.500 24v-5h2v5z" stroke="#444"/></svg><span>选择数据(<u>E</u>)...</span></button>
          <button disabled><svg viewBox="0 0 26 26" fill="#f0f0f0" stroke="#777" stroke-width="1.700"><path d="M3 6l4-3h14l2 2v16l-5 3"/><rect x="3" y="5" width="15" height="19" rx="3"/><path d="M18 7l4-3"/></svg><span>三维旋转(<u>R</u>)...</span></button>
          <hr>
          <button><i></i><span>添加次要网格线(<u>N</u>)</span></button>
          <button><i></i><span>设置主要网格线格式(<u>M</u>)...</span></button>
          <button class="hot"><svg viewBox="0 0 26 26"><svg x="0" y="0" width="20" height="18"><use href="#bucket"/></svg><path d="M25 9v5l-8 7-3-3z" fill="#444"/><path d="M7 25q3 0 3-4 4-4 6 0-1 5-9 4z" fill="#2b5f9e"/></svg><span>设置坐标轴格式(<u>F</u>)...</span></button>
        </div>
      </div>
      <div class="vcol d-flex"><div class="sb"><div class="sbb"><svg width="12" height="7"><path d="M0 7h12L6 0z" fill="#222"/></svg></div><div class="thumb th-v"></div><div class="sbb mt-auto"><svg width="12" height="7"><path d="M0 0h12L6 7z" fill="#222"/></svg></div></div></div>
    </div>
    <div class="foot d-flex">
      <div class="d-flex align-items-center" style="padding-left:35px;gap:35px"><svg width="6" height="12"><path d="M6 0v12L0 6z" fill="#a6a6a6"/></svg><svg width="6" height="12"><path d="M0 0v12l6-6z" fill="#a6a6a6"/></svg></div>
      <a href="#" class="sheettab">Sheet1</a>
      <button aria-label="新工作表"><svg width="24" height="24" fill="none" stroke="#fff" stroke-width="1.600"><circle cx="12" cy="12" r="10.500"/><path d="M12 6.500v11M6.500 12h11" stroke-width="2.200"/></svg></button>
      <svg class="ms-auto align-self-center" width="24" height="16" fill="#e6e6e6"><path d="M0 0h3v3H0zM0 6h3v3H0zM0 12h3v3H0z"/></svg>
      <div class="hbar"><div class="sb hz"><div class="sbb"><svg width="7" height="12"><path d="M7 0v12L0 6z" fill="#222"/></svg></div><div class="thumb th-h"></div><div class="sbb ms-auto"><svg width="7" height="12"><path d="M0 0v12l7-6z" fill="#222"/></svg></div></div></div>
      <div class="vcol"></div>
    </div>
  </div>

  <aside class="pane d-flex flex-column">
    <div class="phead d-flex align-items-center"><h1>设置坐标轴格式</h1>
      <button class="ms-auto" aria-label="任务窗格选项"><svg width="24" height="14" fill="none" stroke="#fff" stroke-width="1.700"><path d="M1 1.500l11 10 11-10"/></svg></button>
      <button style="margin-left:47px" aria-label="关闭窗格"><svg width="17" height="17" fill="none" stroke="#fff" stroke-width="1.700"><path d="M1 1l15 15M16 1L1 16"/></svg></button></div>
    <div class="ptabs d-flex"><svg width="13" height="8" style="margin-top:22px"><path d="M0 0h13L6.500 8z" fill="#b5b5b5"/></svg><a href="#" class="on">坐标轴选项</a><a href="#">文本选项</a></div>
    <div class="picons d-flex">
      <button class="on" aria-label="填充与线条"><svg width="38" height="36"><path d="M2 20L18 4l14 14-15 15z" fill="#0b6632" stroke="#d0d0d0" stroke-width="1.500"/><path d="M11 10V3q0-2 3-2t4 3v10" fill="none" stroke="#d0d0d0" stroke-width="1.500"/><circle cx="18" cy="14" r="2.300" fill="#fff"/><path d="M26 9q12 3 9 17l-4 9V20z" fill="#fff"/></svg></button>
      <button aria-label="效果"><svg width="34" height="40" fill="none" stroke="#c8c8c8" stroke-width="1.500"><path d="M17 2l16 12-6 18H7L1 14zM7 32l-2 7M27 32l2 7"/></svg></button>
      <button class="ms-2" aria-label="大小与属性"><svg width="36" height="38" fill="none" stroke="#c8c8c8" stroke-width="1.500"><path d="M11 12h24v24H11zM11 1v8M35 1v8M11 5h24M0 12h8M0 36h8M4 12v24M23 15v5M23 28v5M14 24h6M26 24h6M21 17l2-2 2 2M21 31l2 2 2-2M16 22l-2 2 2 2M30 22l2 2-2 2M22 24h2"/></svg></button>
      <button class="ms-2" aria-label="坐标轴选项"><svg width="34" height="36" fill="none" stroke="#c8c8c8" stroke-width="1.500"><path d="M1 12h9v23H1zM12 1h9v34h-9zM23 7h10v28H23z"/></svg></button>
    </div>
    <svg class="notch" width="100%" height="16" fill="none" stroke="#b0b0b0" stroke-width="1.600"><path d="M0 15h13L24 2l11 13h900"/></svg>
    <div class="pbody d-flex flex-grow-1">
      <div class="plist flex-grow-1">
        <div class="sec d-flex align-items-center"><svg width="15" height="10" fill="none" stroke="#fff" stroke-width="2"><path d="M1 1.500l6.500 6.500L14 1.500"/></svg>填充</div>
        <div class="opts">
          <label class="opt"><input type="radio" name="fill"><span>无填充(<u>N</u>)</span></label>
          <label class="opt"><input type="radio" name="fill"><span>纯色填充(<u>S</u>)</span></label>
          <label class="opt"><input type="radio" name="fill"><span>渐变填充(<u>G</u>)</span></label>
          <label class="opt"><input type="radio" name="fill"><span>图片或纹理填充(<u>P</u>)</span></label>
          <label class="opt"><input type="radio" name="fill"><span>图案填充(<u>A</u>)</span></label>
          <label class="opt"><input type="radio" name="fill" checked><span>自动(<u>U</u>)</span></label>
        </div>
        <div class="rule"></div>
        <div class="prow"><span>颜色(<u>C</u>)</span><button class="clr" aria-label="填充颜色"><svg width="26" height="26"><svg x="4" y="0" width="21" height="19" viewBox="0 0 32 28"><use href="#bucket"/></svg><path d="M.5 20.500h25v4H.5z" fill="#d2d2d2" stroke="#999"/></svg><svg width="12" height="7"><path d="M0 0h12L6 7z" fill="#222"/></svg></button></div>
        <div class="sec d-flex align-items-center" style="margin-top:22px"><svg width="15" height="10" fill="none" stroke="#fff" stroke-width="2"><path d="M1 1.500l6.500 6.500L14 1.500"/></svg>线条</div>
        <div class="opts">
          <label class="opt"><input type="radio" name="line"><span>无线条(<u>N</u>)</span></label>
          <label class="opt"><input type="radio" name="line"><span>实线(<u>S</u>)</span></label>
          <label class="opt"><input type="radio" name="line"><span>渐变线(<u>G</u>)</span></label>
          <label class="opt"><input type="radio" name="line" checked><span>自动(<u>U</u>)</span></label>
        </div>
        <div class="rule"></div>
        <div class="prow"><span>颜色(<u>C</u>)</span><button class="clr" aria-label="线条颜色"><svg width="26" height="26"><svg x="1" y="0" width="24" height="17" viewBox="0 0 40 28"><use href="#pen"/></svg><path d="M0 20h26v5H0z" fill="#d8d8d8"/></svg><svg width="12" height="7"><path d="M0 0h12L6 7z" fill="#222"/></svg></button></div>
        <div class="prow mt-1"><label for="tr">透明度(<u>T</u>)</label><input type="range" class="rng" id="tr" value="46"><div class="spin"><input type="text" value="46%" aria-label="透明度"><svg width="9" height="26" fill="none" stroke="#333" stroke-width="1.500"><path d="M1 5l3.500-3.500L8 5M1 21l3.500 3.500L8 21"/></svg></div></div>
        <div class="prow"><label for="wd">宽度(<u>W</u>)</label><div class="spin ms-auto"><input type="text" value="0.75 磅" id="wd"><svg width="9" height="26" fill="none" stroke="#333" stroke-width="1.500"><path d="M1 5l3.500-3.500L8 5M1 21l3.500 3.500L8 21"/></svg></div></div>
      </div>
      <div class="sb"><div class="sbb"><svg width="12" height="7"><path d="M0 7h12L6 0z" fill="#222"/></svg></div><div class="thumb th-p"></div><div class="sbb mt-auto"><svg width="12" height="7"><path d="M0 0h12L6 7z" fill="#222"/></svg></div></div>
    </div>
  </aside>
</main>

<footer class="status d-flex align-items-center">
  <span style="padding-left:19px">就绪</span>
  <svg width="22" height="22" style="margin-left:33px" fill="none" stroke="#e6e6e6" stroke-width="1.500"><path d="M3 5v15h17V4"/><path d="M8 2h13v4H8z" fill="#e6e6e6" stroke="none"/><circle cx="5" cy="5" r="4.500" fill="#e6e6e6" stroke="none"/><path d="M5 11h3M10 11h3M15 11h3M5 14h3M10 14h3M15 14h3M5 17h3M10 17h3M15 17h3"/></svg>
  <svg width="22" height="24" style="margin:0 4px 0 34px" fill="none" stroke="#e6e6e6" stroke-width="1.600"><path d="M9 2Q1 4 1 11t6 10M12 3v5M7 9l5 2 7-2M12 11l-3 8M12 13l2 2M11 14l9 9M20 14l-9 9"/><circle cx="12" cy="4" r="1.500"/></svg>
  <b>辅助功能: 调查</b>
  <div class="vb sel ms-auto"><svg width="20" height="20" fill="none" stroke="#eee" stroke-width="1.200"><path d="M1 1h18v18H1zM7 1v18M13 1v18M1 7h18M1 13h18"/></svg></div>
  <div class="vb"><svg width="20" height="20" fill="none" stroke="#eee" stroke-width="1.200"><path d="M1 1h18v18H1zM5 4h10v12H5zM7 7h6M7 10h6M7 13h6"/></svg></div>
  <div class="vb"><svg width="20" height="20" fill="none" stroke="#eee" stroke-width="1.200"><path d="M1 1h18v18H1z"/><path d="M1 1h5v11H1zM8 1h6v10H8z" fill="#eee"/></svg></div>
  <button aria-label="缩小" style="margin-left:10px"><svg width="14" height="14" stroke="#eee" stroke-width="1.500"><path d="M0 7h14"/></svg></button>
  <input type="range" class="zoomr" min="0" max="100" value="33" aria-label="缩放">
  <button aria-label="放大"><svg width="14" height="14" stroke="#eee" stroke-width="1.500"><path d="M0 7h14M7 0v14"/></svg></button>
  <span class="pct">70%</span>
</footer>
</div>

<script>
const b=[97.720189,99.18229,99.510065,99.011948,100,99.071206,99.668615,99.188085,100,99.011534,99.60265,99.055979,100,99.130485,99.484351,99.300019,100,99.461134,99.901647,99.542924,100,99.648987,99.763702,99.019609,100,99.194841,99.630425,99.230794,100,99.035804,99.874535,100,100,100,100,100,100,100,100,99.769346,100];
const c=[93.970732,99.405632,99.923752,99.20394,100,99.312363,100,99.517311,100,99.190764,100,99.271912,100,99.404921,99.894593,99.59592,100,99.968362,100,100,100,100,100,99.277447,100,99.49832,100,99.575205,100,99.276846,100,100,100,100,100,100,100,100,100,100,100];
const heads=["vmaf_4k","vmaf_1080p","name","min","max","mean","harmonic_mean","aggregate_metrics"];
const arrow='<svg width="8" height="5"><path d="M0 0h8L4 5z" fill="#555"/></svg>';
let rows='<tr class="hd"><th scope="row">1</th>'+heads.map(h=>`<td><div class="d-flex justify-content-between align-items-center"><span>${h}</span><span class="flt">${arrow}</span></div></td>`).join('')+'<td></td>'.repeat(8)+'</tr>';
b.forEach((v,i)=>{rows+=`<tr class="${i%2?'':'band'}"><th scope="row">${i+2}</th><td>${v}</td><td>${c[i]}</td>${'<td></td>'.repeat(14)}</tr>`});
document.getElementById('cells').innerHTML=rows;

// chart: one point every 6.7 px, 18.7 px per unit on the value axis
const b2=b.slice(),c2=c.slice();
for(let i=41;i<92;i++){b2[i]=100;c2[i]=100}
Object.assign(b2,{41:99.7,43:99.36,45:99.4,47:99.5,49:99.45,51:99.25,53:99.18,55:99.28,57:99.34,59:99.25,61:99.43,63:99.75,65:99.75,67:99.59,69:99.85,81:99.85,83:99.5,85:99.36,87:99.65,89:99.34});
Object.assign(c2,{43:99.87,45:99.87,49:99.84,51:99.66,53:99.57,55:99.64,57:99.82,59:99.66,61:99.93,85:99.79,89:99.79});
const X=i=>57+i*6.7,Y=v=>250-(v-100)*18.7;
let s='<path d="M13 2h1400v1000H13z" fill="#fff"/><path d="M57 63h1400v960H57z" fill="url(#hatch)"/>';
s+='<path d="M57 63.500h1400M57 250.500h1400M57 437.500h1400M57 624.500h1400M57 810.500h1400M392.500 63v960" stroke="#d9d9d9" fill="none"/>';
s+='<text x="23" y="67">110</text><text x="23" y="254">100</text><text x="30" y="441">90</text><text x="30" y="628">80</text><text x="30" y="815">70</text>';
s+='<text x="566" y="37" font-size="21" fill="#7f7f7f">Netflix_BoxingPractice</text>';
const line=(d,k)=>`<polyline points="${d.map((v,i)=>X(i)+','+Y(v)).join(' ')}" fill="none" stroke="${k}" stroke-opacity=".4"/>`;
s+=line(b2,'#5b9bd5')+line(c2,'#ed7d31');
b2.forEach((v,i)=>{const x=X(i),y=Y(v);s+=`<path d="M${x} ${y-4}l4 4-4 4-4-4z" fill="#fff" stroke="#4472c4" stroke-width="1.700"/>`});
c2.forEach((v,i)=>{s+=`<rect x="${X(i)-4.5}" y="${Y(v)-4.5}" width="9" height="9" fill="#fff" stroke="#ed7d31" stroke-width="1.700"/>`});
s+='<path d="M23 1000V54.500h34V1000" fill="none" stroke="#7f7f7f" stroke-width="2"/><g fill="#cfe6f8" stroke="#2e8bd6" stroke-width="1.500"><circle cx="23" cy="54" r="4"/><circle cx="57" cy="54" r="4"/></g>';
s+='<path d="M12.500 1000V2h1400" fill="none" stroke="#666" stroke-width="2.500"/><g fill="#fff" stroke="#666" stroke-width="3"><circle cx="12.500" cy="2" r="8"/><circle cx="12.500" cy="629" r="8"/></g>';
document.getElementById('chart').insertAdjacentHTML('beforeend',s);
</script>
</body>
</html>
